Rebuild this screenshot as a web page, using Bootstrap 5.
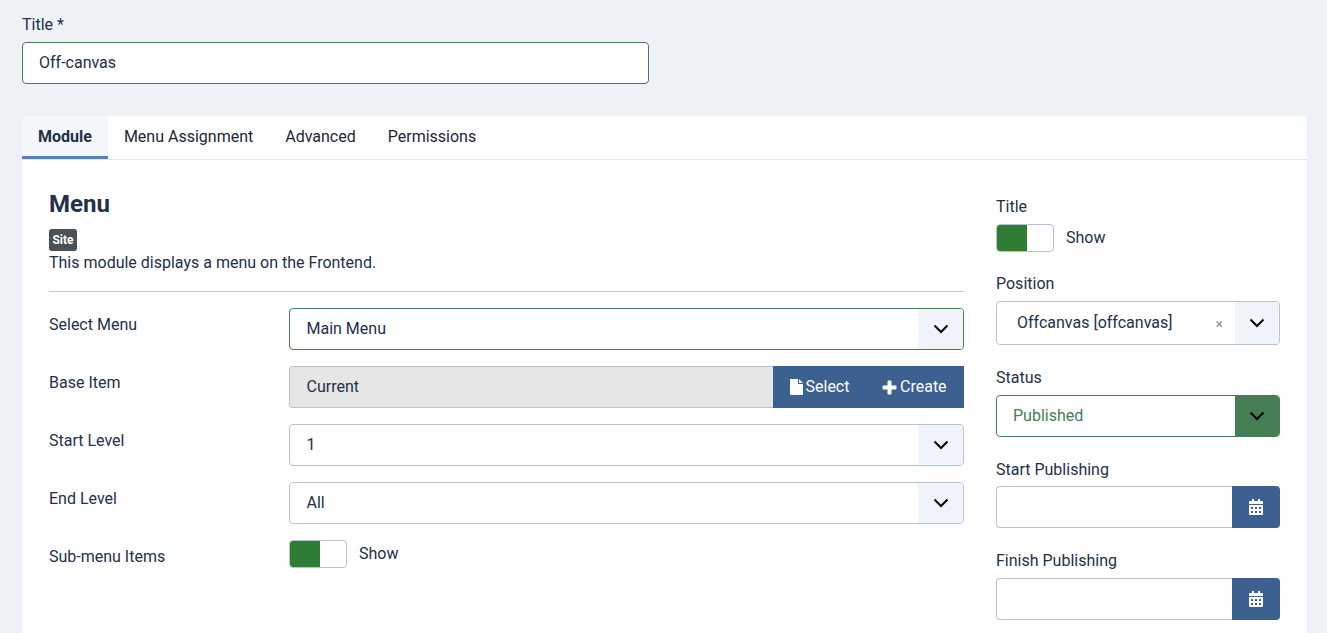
<!DOCTYPE html>
<html lang="en">
<head>
<meta charset="utf-8">
<title>Off-canvas</title>
<link href="https://cdn.jsdelivr.net/npm/bootstrap@5.3.0/dist/css/bootstrap.min.css" rel="stylesheet">
<style>
:root{--ink:#22304a;--navy:#3c6090;--line:#b8c2d4;--grn:#2e7d32;}
html,body{height:633px;overflow:hidden}
body{background:#eef2f7;font-family:Roboto,"Liberation Sans",sans-serif;font-size:16px;color:var(--ink);padding:0 20px 0 22px;line-height:24px}
.lab-top{padding-top:13px;height:42px;line-height:24px;margin:0}
.fld{height:42px;border:1px solid var(--line);border-radius:4px;background:#fff;padding:0 16px;line-height:40px;color:#22304a;display:flex;align-items:center}
.fld.okg{border-color:#457d54}
.title-fld{width:627px}
.sheet{margin-top:32px;width:1285px;height:540px;background:#fff;border-radius:4px 4px 0 0;overflow:hidden}
.tabbar{height:44px;border-bottom:1px solid #dfe3ea}
.tabitem{padding:0 16px;height:43px;line-height:41px;color:#1d2636;text-decoration:none;display:block}
.tabitem.on{font-weight:700;color:#22304a;background:#f3f6fb;border-bottom:3px solid #5580ba}
.sheet-body{padding:28px 27px 0;display:flex;gap:32px}
.main-col{width:915px}
.side-col{width:284px;padding-top:7px}
.h-menu{font-size:24px;font-weight:700;line-height:30px;margin:0;padding-top:1px;color:#22304a}
.tag-site{display:block;width:28px;height:22px;background:#495057;color:#fff;font-size:12px;font-weight:700;line-height:22px;text-align:center;border-radius:3px;margin-top:10px}
.desc{margin:0;line-height:24px}
.rule{margin:16px 0 16px;border:0;border-top:1px solid #c4c8cf;opacity:1}
.frow{display:flex;margin-bottom:16px;height:42px}
.frow .lbl{width:240px;flex:none;line-height:34px}
.frow .ctl{flex:1;min-width:0}
.sel{position:relative;padding-right:62px}
.main-col .fld,.main-col .ro{padding-left:16.500px}
.caret{position:absolute;top:0;right:0;bottom:0;width:45px;background:#eff4fb;border-radius:0 3px 3px 0;display:flex;align-items:center;justify-content:center}
.side-col .caret{width:44px}
.caret.solid{background:#457d54}
.caret svg{width:16px;height:10px;display:block}
.base{display:flex;height:42px}
.base .ro{flex:1;background:#e6e6e6;border:1px solid var(--line);border-right:0;border-radius:4px 0 0 4px;line-height:40px}
.btnav{background:var(--navy);color:#fff;display:flex;align-items:center;gap:3px;height:42px;line-height:42px}
.btn-sel{width:94px;padding-left:16.500px}
.btn-cre{width:97px;padding-left:15px}
.sw{display:flex;width:58px;height:28px;border:1px solid var(--line);border-radius:4px;overflow:hidden;background:#fff}
.sw i{display:block;width:30px;background:var(--grn)}
.swrow{display:flex;align-items:center;gap:12px;height:28px}
.side-lab{margin:0 0 5px;line-height:24px;height:24px}
.side-lab.tight{margin-bottom:4px}
.side-group{margin-bottom:21px}
.side-group.first{margin-bottom:20px}
.dategrp{display:flex;height:42px}
.dategrp .dt{flex:1;background:#fff;border:1px solid var(--line);border-right:0;border-radius:4px 0 0 4px}
.dategrp .cal{width:48px;background:var(--navy);border-radius:0 4px 4px 0;display:flex;align-items:center;justify-content:center}
.pub{color:#457d54}
.pos-fld{height:44px;padding-left:20px}
.clear-x{position:absolute;right:56px;top:12px;color:#8d96a3;font-size:14px;line-height:20px}
</style>
</head>
<body>
<label class="lab-top d-block">Title *</label>
<div class="fld okg title-fld">Off-canvas</div>

<div class="sheet">
  <nav class="tabbar d-flex">
    <a class="tabitem on" href="#">Module</a>
    <a class="tabitem" href="#">Menu Assignment</a>
    <a class="tabitem" href="#">Advanced</a>
    <a class="tabitem" href="#">Permissions</a>
  </nav>
  <div class="sheet-body">
    <div class="main-col">
      <h2 class="h-menu">Menu</h2>
      <span class="tag-site">Site</span>
      <p class="desc">This module displays a menu on the Frontend.</p>
      <hr class="rule">
      <div class="frow"><div class="lbl">Select Menu</div><div class="ctl"><div class="fld okg sel">Main Menu<span class="caret"><svg viewBox="0 0 16 10"><path d="M1.500 1.500 8 8l6.500-6.500" fill="none" stroke="#000" stroke-width="2"/></svg></span></div></div></div>
      <div class="frow"><div class="lbl">Base Item</div><div class="ctl"><div class="base"><div class="ro">Current</div>
        <div class="btnav btn-sel"><svg width="13" height="16" viewBox="0 0 13 16"><path d="M0 0h8v5h5v11H0zM9 0l4 4H9z" fill="#fff"/></svg>Select</div>
        <div class="btnav btn-cre"><svg width="15" height="15" viewBox="0 0 15 15"><path d="M5.500 1.500a1 1 0 0 1 1-1h2a1 1 0 0 1 1 1v4h4a1 1 0 0 1 1 1v2a1 1 0 0 1-1 1h-4v4a1 1 0 0 1-1 1h-2a1 1 0 0 1-1-1v-4h-4a1 1 0 0 1-1-1v-2a1 1 0 0 1 1-1h4z" fill="#fff"/></svg>Create</div>
      </div></div></div>
      <div class="frow"><div class="lbl">Start Level</div><div class="ctl"><div class="fld sel">1<span class="caret"><svg viewBox="0 0 16 10"><path d="M1.500 1.500 8 8l6.500-6.500" fill="none" stroke="#000" stroke-width="2"/></svg></span></div></div></div>
      <div class="frow"><div class="lbl">End Level</div><div class="ctl"><div class="fld sel">All<span class="caret"><svg viewBox="0 0 16 10"><path d="M1.500 1.500 8 8l6.500-6.500" fill="none" stroke="#000" stroke-width="2"/></svg></span></div></div></div>
      <div class="frow"><div class="lbl">Sub-menu Items</div><div class="ctl"><div class="swrow"><div class="sw"><i></i></div><span>Show</span></div></div></div>
    </div>
    <div class="side-col">
      <div class="side-group first"><p class="side-lab">Title</p>
        <div class="swrow"><div class="sw"><i></i></div><span>Show</span></div></div>
      <div class="side-group"><p class="side-lab">Position</p>
        <div class="fld sel pos-fld">Offcanvas [offcanvas]<span class="clear-x">×</span><span class="caret"><svg viewBox="0 0 16 10"><path d="M1.500 1.500 8 8l6.500-6.500" fill="none" stroke="#000" stroke-width="2"/></svg></span></div></div>
      <div class="side-group"><p class="side-lab">Status</p>
        <div class="fld okg sel pub">Published<span class="caret solid"><svg viewBox="0 0 16 10"><path d="M1.500 1.500 8 8l6.500-6.500" fill="none" stroke="#000" stroke-width="2"/></svg></span></div></div>
      <div class="side-group"><p class="side-lab tight">Start Publishing</p>
        <div class="dategrp"><div class="dt"></div><div class="cal"><svg width="14" height="16" viewBox="0 0 14 16"><path fill="#fff" d="M3 0h2v2h4V0h2v2h2a1 1 0 0 1 1 1v2H0V3a1 1 0 0 1 1-1h2zM0 6h14v9a1 1 0 0 1-1 1H1a1 1 0 0 1-1-1zm2 2v2h2V8zm4 0v2h2V8zm4 0v2h2V8zm-8 4v2h2v-2zm4 0v2h2v-2zm4 0v2h2v-2z" fill-rule="evenodd"/></svg></div></div></div>
      <div class="side-group"><p class="side-lab">Finish Publishing</p>
        <div class="dategrp"><div class="dt"></div><div class="cal"><svg width="14" height="16" viewBox="0 0 14 16"><path fill="#fff" d="M3 0h2v2h4V0h2v2h2a1 1 0 0 1 1 1v2H0V3a1 1 0 0 1 1-1h2zM0 6h14v9a1 1 0 0 1-1 1H1a1 1 0 0 1-1-1zm2 2v2h2V8zm4 0v2h2V8zm4 0v2h2V8zm-8 4v2h2v-2zm4 0v2h2v-2zm4 0v2h2v-2z" fill-rule="evenodd"/></svg></div></div></div>
    </div>
  </div>
</div>
<script src="https://cdn.jsdelivr.net/npm/bootstrap@5.3.0/dist/js/bootstrap.bundle.min.js"></script>
</body>
</html>
